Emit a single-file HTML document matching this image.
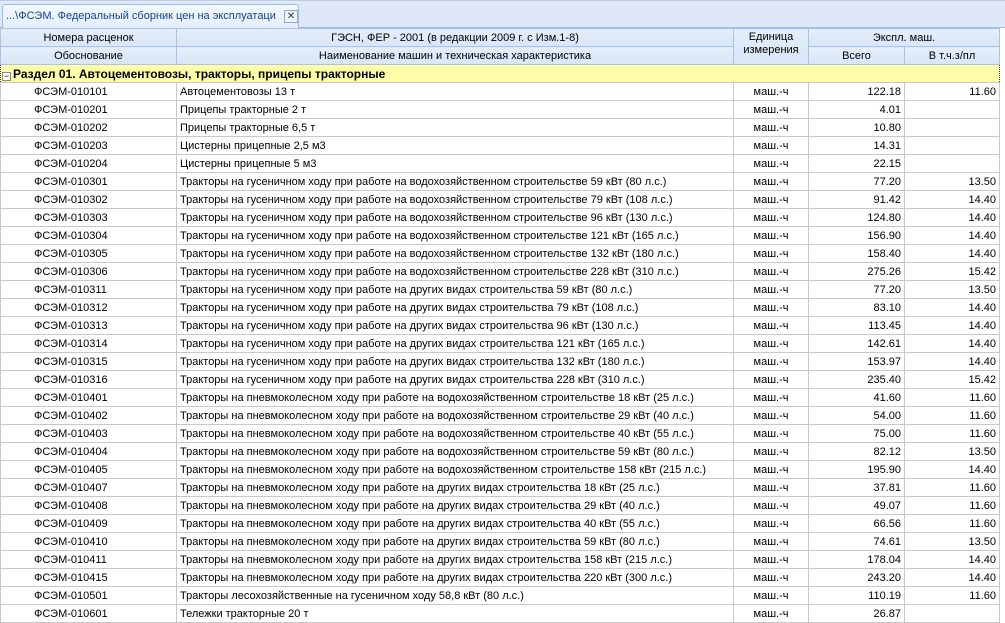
<!DOCTYPE html>
<html><head><meta charset="utf-8"><style>
*{margin:0;padding:0;box-sizing:border-box}
body{width:1005px;height:622px;overflow:hidden;background:#fff;font-family:"Liberation Sans","DejaVu Sans",sans-serif;font-size:11px;color:#000;position:relative}
.strip{position:absolute;left:0;top:0;width:1005px;height:28px;background:#dfe8f6;border-bottom:1px solid #99bbe8}
.strip .top{position:absolute;left:0;top:0;width:1005px;height:1px;background:#bcd}
.tab{position:absolute;left:2px;top:4px;width:297px;height:24px;background:linear-gradient(#f3f8ff,#e3eefb);border:1px solid #99bbe8;border-bottom:none;border-radius:3px 3px 0 0;color:#15428b;font-size:11px;line-height:22px;padding-left:3px;white-space:nowrap}
.x{position:absolute;left:281px;top:5px;width:14px;height:13px;border:1px solid #8aa8d0;background:#eef4fc;font-size:10px;line-height:11px;text-align:center;color:#333}
table{position:absolute;left:0;top:28px;border-collapse:collapse;table-layout:fixed;width:999px}
td,th{height:18px;border:1px solid #c8c8c8;white-space:nowrap;overflow:hidden;padding:0 3px;font-weight:normal;line-height:16px}
th{background:linear-gradient(#e4eefb,#d8e6f8);border-color:#a9c4e8;text-align:center;color:#000}
td.c{text-align:center}td.r{text-align:right}
td.code{padding-left:33px}
tr.sec td{background:#fefea8;font-weight:bold;border:1px dotted #333;padding-left:1px;font-size:12px}
.pm{display:inline-block;width:9px;height:9px;border:1px solid #888;background:#fff;vertical-align:-1px;margin-right:2px;font-size:9px;line-height:6px;text-align:center;font-weight:normal}
</style></head><body>
<div class="strip"><div class="top"></div><div class="tab">...\ФСЭМ. Федеральный сборник цен на эксплуатаци<span class="x">✕</span></div></div>
<table>
<colgroup><col style="width:176px"><col style="width:557px"><col style="width:75px"><col style="width:96px"><col style="width:95px"></colgroup>
<tr><th>Номера расценок</th><th>ГЭСН, ФЕР - 2001 (в редакции 2009 г. с Изм.1-8)</th><th rowspan="2" style="vertical-align:top;line-height:13px;padding-top:2px">Единица<br>измерения</th><th colspan="2">Экспл. маш.</th></tr>
<tr><th>Обоснование</th><th>Наименование машин и техническая характеристика</th><th>Всего</th><th>В т.ч.з/пл</th></tr>
<tr class="sec"><td colspan="5"><span class="pm">−</span>Раздел 01. Автоцементовозы, тракторы, прицепы тракторные</td></tr>
<tr><td class="code">ФСЭМ-010101</td><td>Автоцементовозы 13 т</td><td class="c">маш.-ч</td><td class="r">122.18</td><td class="r">11.60</td></tr>
<tr><td class="code">ФСЭМ-010201</td><td>Прицепы тракторные 2 т</td><td class="c">маш.-ч</td><td class="r">4.01</td><td class="r"></td></tr>
<tr><td class="code">ФСЭМ-010202</td><td>Прицепы тракторные 6,5 т</td><td class="c">маш.-ч</td><td class="r">10.80</td><td class="r"></td></tr>
<tr><td class="code">ФСЭМ-010203</td><td>Цистерны прицепные 2,5 м3</td><td class="c">маш.-ч</td><td class="r">14.31</td><td class="r"></td></tr>
<tr><td class="code">ФСЭМ-010204</td><td>Цистерны прицепные 5 м3</td><td class="c">маш.-ч</td><td class="r">22.15</td><td class="r"></td></tr>
<tr><td class="code">ФСЭМ-010301</td><td>Тракторы на гусеничном ходу при работе на водохозяйственном строительстве 59 кВт (80 л.с.)</td><td class="c">маш.-ч</td><td class="r">77.20</td><td class="r">13.50</td></tr>
<tr><td class="code">ФСЭМ-010302</td><td>Тракторы на гусеничном ходу при работе на водохозяйственном строительстве 79 кВт (108 л.с.)</td><td class="c">маш.-ч</td><td class="r">91.42</td><td class="r">14.40</td></tr>
<tr><td class="code">ФСЭМ-010303</td><td>Тракторы на гусеничном ходу при работе на водохозяйственном строительстве 96 кВт (130 л.с.)</td><td class="c">маш.-ч</td><td class="r">124.80</td><td class="r">14.40</td></tr>
<tr><td class="code">ФСЭМ-010304</td><td>Тракторы на гусеничном ходу при работе на водохозяйственном строительстве 121 кВт (165 л.с.)</td><td class="c">маш.-ч</td><td class="r">156.90</td><td class="r">14.40</td></tr>
<tr><td class="code">ФСЭМ-010305</td><td>Тракторы на гусеничном ходу при работе на водохозяйственном строительстве 132 кВт (180 л.с.)</td><td class="c">маш.-ч</td><td class="r">158.40</td><td class="r">14.40</td></tr>
<tr><td class="code">ФСЭМ-010306</td><td>Тракторы на гусеничном ходу при работе на водохозяйственном строительстве 228 кВт (310 л.с.)</td><td class="c">маш.-ч</td><td class="r">275.26</td><td class="r">15.42</td></tr>
<tr><td class="code">ФСЭМ-010311</td><td>Тракторы на гусеничном ходу при работе на других видах строительства 59 кВт (80 л.с.)</td><td class="c">маш.-ч</td><td class="r">77.20</td><td class="r">13.50</td></tr>
<tr><td class="code">ФСЭМ-010312</td><td>Тракторы на гусеничном ходу при работе на других видах строительства 79 кВт (108 л.с.)</td><td class="c">маш.-ч</td><td class="r">83.10</td><td class="r">14.40</td></tr>
<tr><td class="code">ФСЭМ-010313</td><td>Тракторы на гусеничном ходу при работе на других видах строительства 96 кВт (130 л.с.)</td><td class="c">маш.-ч</td><td class="r">113.45</td><td class="r">14.40</td></tr>
<tr><td class="code">ФСЭМ-010314</td><td>Тракторы на гусеничном ходу при работе на других видах строительства 121 кВт (165 л.с.)</td><td class="c">маш.-ч</td><td class="r">142.61</td><td class="r">14.40</td></tr>
<tr><td class="code">ФСЭМ-010315</td><td>Тракторы на гусеничном ходу при работе на других видах строительства 132 кВт (180 л.с.)</td><td class="c">маш.-ч</td><td class="r">153.97</td><td class="r">14.40</td></tr>
<tr><td class="code">ФСЭМ-010316</td><td>Тракторы на гусеничном ходу при работе на других видах строительства 228 кВт (310 л.с.)</td><td class="c">маш.-ч</td><td class="r">235.40</td><td class="r">15.42</td></tr>
<tr><td class="code">ФСЭМ-010401</td><td>Тракторы на пневмоколесном ходу при работе на водохозяйственном строительстве 18 кВт (25 л.с.)</td><td class="c">маш.-ч</td><td class="r">41.60</td><td class="r">11.60</td></tr>
<tr><td class="code">ФСЭМ-010402</td><td>Тракторы на пневмоколесном ходу при работе на водохозяйственном строительстве 29 кВт (40 л.с.)</td><td class="c">маш.-ч</td><td class="r">54.00</td><td class="r">11.60</td></tr>
<tr><td class="code">ФСЭМ-010403</td><td>Тракторы на пневмоколесном ходу при работе на водохозяйственном строительстве 40 кВт (55 л.с.)</td><td class="c">маш.-ч</td><td class="r">75.00</td><td class="r">11.60</td></tr>
<tr><td class="code">ФСЭМ-010404</td><td>Тракторы на пневмоколесном ходу при работе на водохозяйственном строительстве 59 кВт (80 л.с.)</td><td class="c">маш.-ч</td><td class="r">82.12</td><td class="r">13.50</td></tr>
<tr><td class="code">ФСЭМ-010405</td><td>Тракторы на пневмоколесном ходу при работе на водохозяйственном строительстве 158 кВт (215 л.с.)</td><td class="c">маш.-ч</td><td class="r">195.90</td><td class="r">14.40</td></tr>
<tr><td class="code">ФСЭМ-010407</td><td>Тракторы на пневмоколесном ходу при работе на других видах строительства 18 кВт (25 л.с.)</td><td class="c">маш.-ч</td><td class="r">37.81</td><td class="r">11.60</td></tr>
<tr><td class="code">ФСЭМ-010408</td><td>Тракторы на пневмоколесном ходу при работе на других видах строительства 29 кВт (40 л.с.)</td><td class="c">маш.-ч</td><td class="r">49.07</td><td class="r">11.60</td></tr>
<tr><td class="code">ФСЭМ-010409</td><td>Тракторы на пневмоколесном ходу при работе на других видах строительства 40 кВт (55 л.с.)</td><td class="c">маш.-ч</td><td class="r">66.56</td><td class="r">11.60</td></tr>
<tr><td class="code">ФСЭМ-010410</td><td>Тракторы на пневмоколесном ходу при работе на других видах строительства 59 кВт (80 л.с.)</td><td class="c">маш.-ч</td><td class="r">74.61</td><td class="r">13.50</td></tr>
<tr><td class="code">ФСЭМ-010411</td><td>Тракторы на пневмоколесном ходу при работе на других видах строительства 158 кВт (215 л.с.)</td><td class="c">маш.-ч</td><td class="r">178.04</td><td class="r">14.40</td></tr>
<tr><td class="code">ФСЭМ-010415</td><td>Тракторы на пневмоколесном ходу при работе на других видах строительства 220 кВт (300 л.с.)</td><td class="c">маш.-ч</td><td class="r">243.20</td><td class="r">14.40</td></tr>
<tr><td class="code">ФСЭМ-010501</td><td>Тракторы лесохозяйственные на гусеничном ходу 58,8 кВт (80 л.с.)</td><td class="c">маш.-ч</td><td class="r">110.19</td><td class="r">11.60</td></tr>
<tr><td class="code">ФСЭМ-010601</td><td>Тележки тракторные 20 т</td><td class="c">маш.-ч</td><td class="r">26.87</td><td class="r"></td></tr>
</table>
</body></html>
